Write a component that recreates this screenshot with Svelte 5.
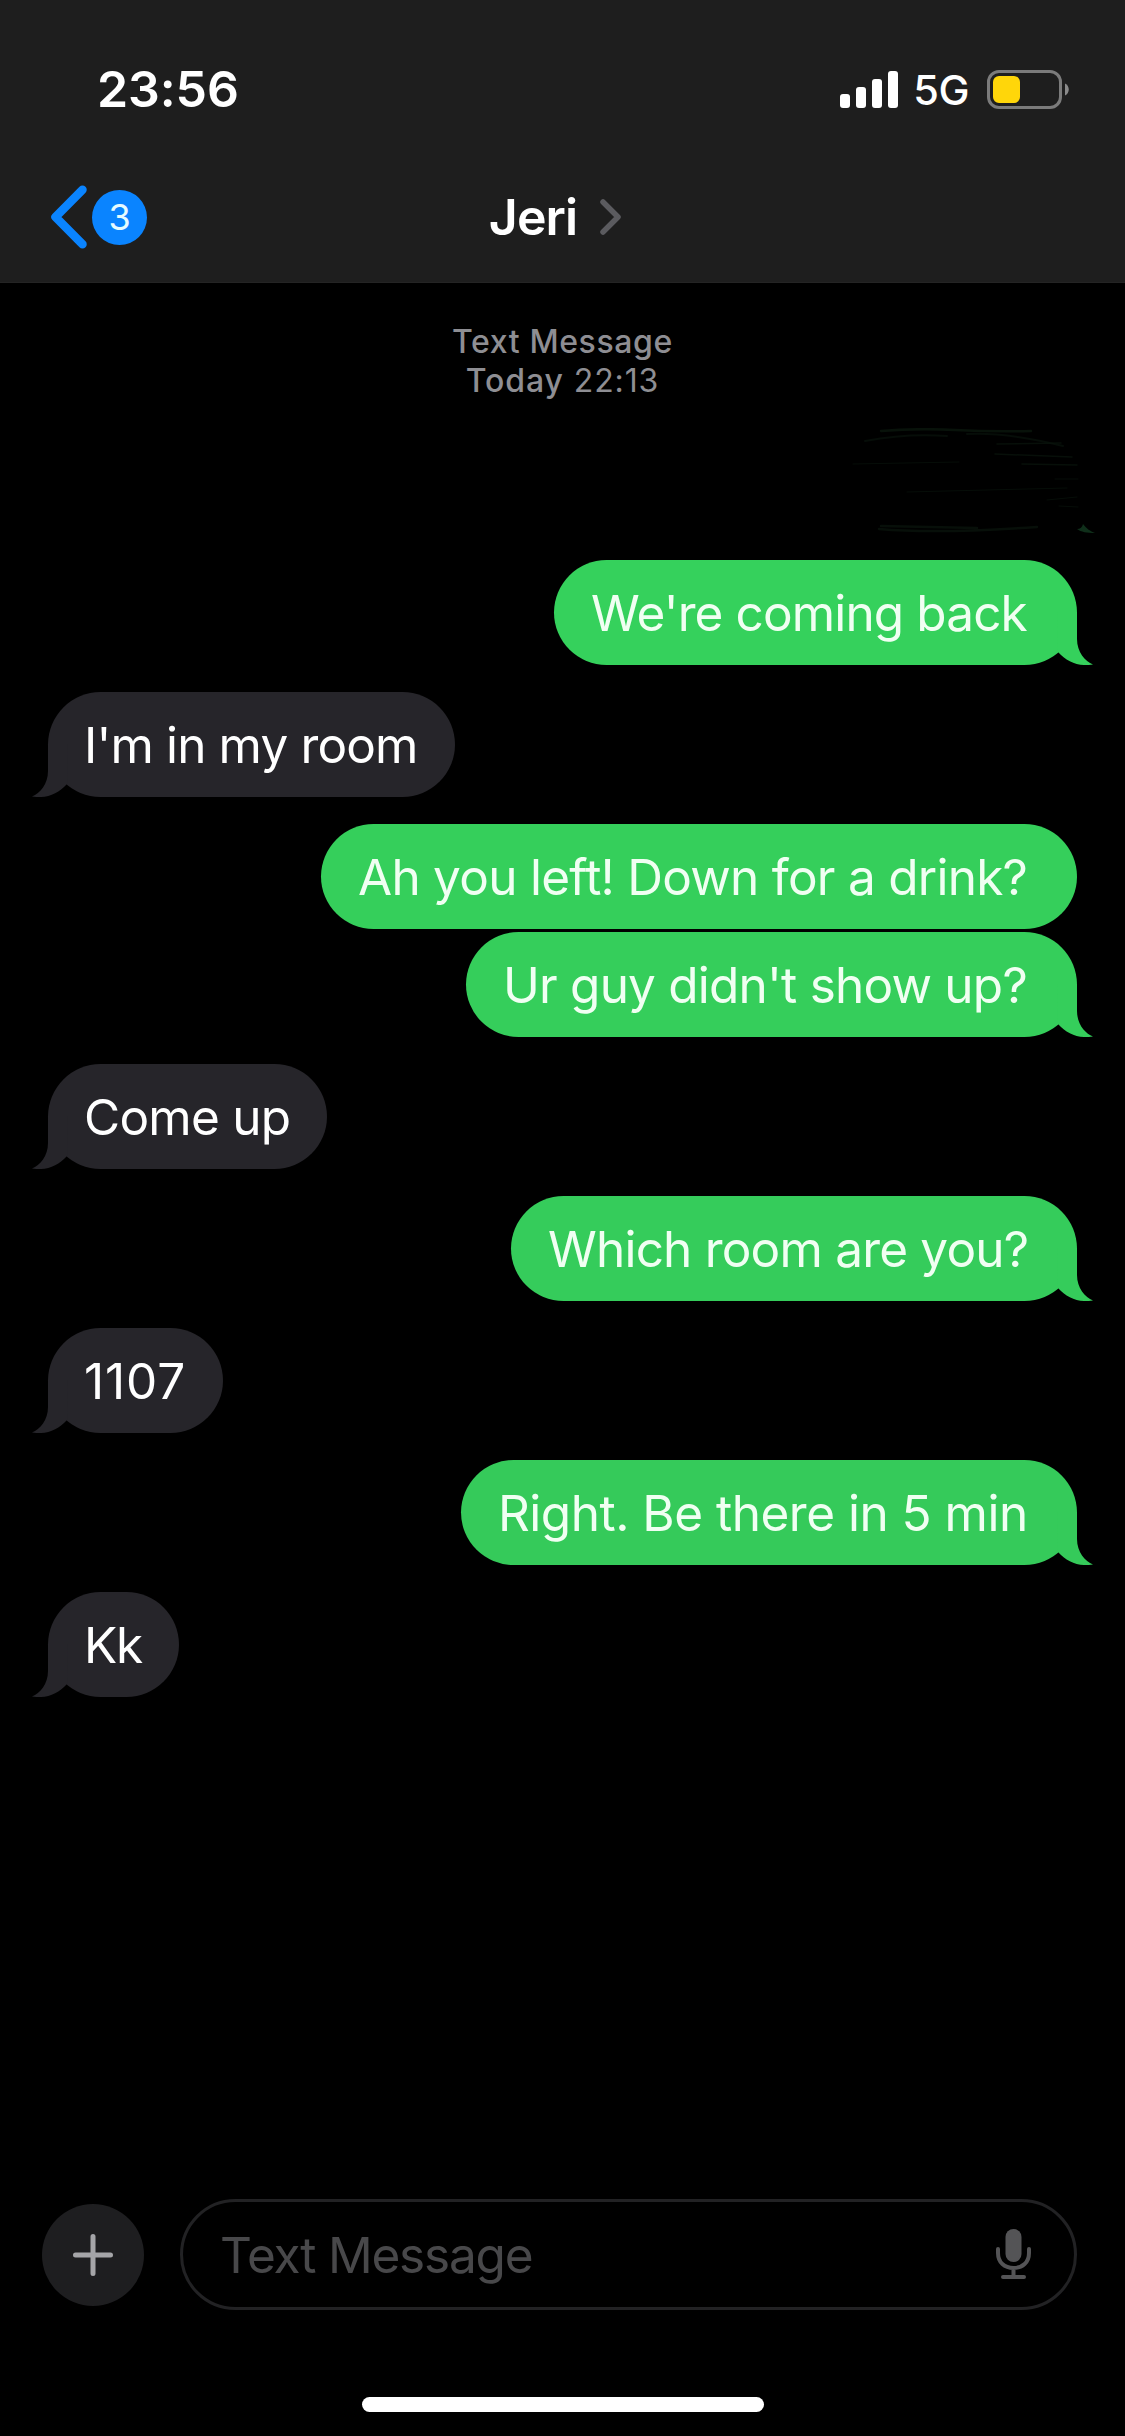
<script lang="ts">
	interface Message {
		text: string;
		from: 'me' | 'them';
		width: number;
		tracking: number;
		color: string;
		tail?: boolean;
		tight?: boolean;
	}

	const messages: Message[] = [
		{ text: "We're coming back", from: 'me', width: 523, tracking: -0.87, color: '#35d15c', tail: true },
		{ text: "I'm in my room", from: 'them', width: 407, tracking: -0.85, color: '#26252a', tail: true },
		{ text: 'Ah you left! Down for a drink?', from: 'me', width: 756, tracking: -0.74, color: '#35cf5b' },
		{ text: "Ur guy didn't show up?", from: 'me', width: 611, tracking: -0.78, color: '#35ce5b', tail: true, tight: true },
		{ text: 'Come up', from: 'them', width: 279, tracking: -0.75, color: '#26252a', tail: true },
		{ text: 'Which room are you?', from: 'me', width: 566, tracking: -0.8, color: '#35cc5b', tail: true },
		{ text: '1107', from: 'them', width: 175, tracking: 0.9, color: '#26252a', tail: true },
		{ text: 'Right. Be there in 5 min', from: 'me', width: 616, tracking: -0.5, color: '#35ca5a', tail: true },
		{ text: 'Kk', from: 'them', width: 131, tracking: -1.3, color: '#26252a', tail: true }
	];

	const contact = 'Jeri';
	const unread = 3;
	let draft = $state('');
</script>

<div class="phone">
	<header class="top">
		<div class="status">
			<span class="clock">23:56</span>
			<div class="indicators">
				<svg class="signal" viewBox="0 0 58 37">
					<rect x="0" y="23" width="10" height="14" rx="3" />
					<rect x="16" y="16" width="10" height="21" rx="3" />
					<rect x="32" y="8" width="10" height="29" rx="3" />
					<rect x="48" y="0" width="10" height="37" rx="3" />
				</svg>
				<span class="network">5G</span>
				<svg class="battery" viewBox="0 0 82 39">
					<rect x="1.5" y="1.5" width="72" height="36" rx="10.5" fill="none" stroke="#7b7b7b" stroke-width="3" />
					<rect x="6" y="6" width="27" height="27" rx="6" fill="#ffd60a" />
					<path d="M78 13.5C83 15.500 83 23.500 78 25.500Z" fill="#8a8a8a" />
				</svg>
			</div>
		</div>

		<nav class="nav">
			<button class="back" aria-label="Back">
				<svg viewBox="0 0 38 64">
					<path d="M32.500 4.700L5.500 32L32.500 59.300" fill="none" stroke="#0a84ff" stroke-width="8.500" stroke-linecap="round" stroke-linejoin="round" />
				</svg>
				<span class="badge">{unread}</span>
			</button>
			<div class="contact">
				<span>{contact}</span>
				<svg viewBox="0 0 22 36">
					<path d="M3 3L18 18L3 33" fill="none" stroke="#5b5b5f" stroke-width="5.500" stroke-linecap="round" stroke-linejoin="round" />
				</svg>
			</div>
		</nav>
	</header>

	<main class="thread">
		<div class="stamp">
			<div class="service">Text Message</div>
			<div class="day"><b>Today</b> 22:13</div>
		</div>

		<!-- Removed message, only a faint trace remains -->
		<svg class="ghost" viewBox="0 0 250 105">
			<g fill="none" stroke="#0a160d" stroke-linecap="round">
				<path d="M34 3Q70 0 108 2T184 3" stroke-width="2.500" opacity=".8" />
				<path d="M18 13Q60 5 100 8M120 6Q160 4 216 18" stroke-width="2" opacity=".6" />
				<path d="M150 16L214 15M148 26L225 29M175 36L230 37" stroke-width="1.500" opacity=".7" />
				<path d="M6 36L112 34M60 64L220 60M208 51L231 51M200 72L230 69M212 78L231 79" stroke-width="1" opacity=".6" />
				<path d="M32 101Q90 106 190 99M34 98L130 100" stroke-width="2.500" opacity=".7" />
			</g>
			<path d="M236 96C240 101 243 103 248 105C240 105 234 104 230 101Q235 101 236 96Z" fill="#0f2f1a" />
		</svg>

		{#each messages as m}
			<div class="row {m.from}" class:tight={m.tight}>
				<div class="bubble" style="width: {m.width}px; background: {m.color}; letter-spacing: {m.tracking}px">
					{m.text}
					{#if m.tail}
						<svg class="tail" viewBox="0 0 37 53" fill={m.color}>
							<path d="M0 0H20V27C20 40 28 49.500 36 52.500Q32 53 27 53C17 52.500 8 48 1 40Z" />
						</svg>
					{/if}
				</div>
			</div>
		{/each}
	</main>

	<footer class="composer">
		<button class="add" aria-label="Add">
			<svg viewBox="0 0 40 42">
				<path d="M20 2.500V39.500M2.500 21H37.500" stroke="#a5a5a8" stroke-width="5" stroke-linecap="round" />
			</svg>
		</button>
		<div class="field">
			<input type="text" placeholder="Text Message" bind:value={draft} />
			<svg class="mic" viewBox="0 0 35 51">
				<rect x="9.500" y="0" width="16" height="33" rx="8" fill="#545456" />
				<path d="M2 20V24C2 33.500 8.500 39 17.500 39S33 33.500 33 24V20M17.500 39V48M7 48H28" fill="none" stroke="#545456" stroke-width="4" stroke-linecap="round" />
			</svg>
		</div>
	</footer>

	<div class="home"></div>
</div>

<style>
	:global(body) {
		margin: 0;
		background: #000;
	}

	.phone {
		width: 1125px;
		height: 2436px;
		display: flex;
		flex-direction: column;
		background: #000;
		color: #fff;
		font-family: Inter, 'Liberation Sans', sans-serif;
		overflow: hidden;
	}

	button {
		border: none;
		padding: 0;
		background: none;
		font: inherit;
		color: inherit;
	}

	svg {
		display: block;
		flex: none;
	}

	/* Header */
	.top {
		height: 283px;
		box-sizing: border-box;
		background: #1e1e1e;
		border-bottom: 1px solid #242424;
		flex: none;
	}

	.status {
		display: flex;
		justify-content: space-between;
		align-items: center;
		height: 178px;
		padding: 0 56px 0 97px;
	}

	.clock {
		font-size: 50px;
		font-weight: 600;
		letter-spacing: -0.1px;
	}

	.indicators {
		display: flex;
		align-items: center;
	}

	.signal {
		width: 58px;
		height: 37px;
		fill: #fff;
	}

	.network {
		font-size: 41.5px;
		font-weight: 500;
		letter-spacing: -0.5px;
		margin: 1px 18px 0 15px;
	}

	.battery {
		width: 82px;
		height: 39px;
	}

	.nav {
		display: grid;
		grid-template-columns: 1fr auto 1fr;
		align-items: center;
		height: 78px;
		padding: 0 50px;
	}

	.back {
		display: flex;
		align-items: center;
		gap: 4px;
	}

	.back svg {
		width: 38px;
		height: 64px;
	}

	.badge {
		width: 55px;
		height: 55px;
		border-radius: 50%;
		background: #0a84ff;
		color: #e6fbff;
		font-size: 36px;
		line-height: 55px;
		text-align: center;
	}

	.contact {
		display: flex;
		align-items: center;
		gap: 23px;
		margin-right: 14px;
		font-size: 50px;
		font-weight: 600;
		letter-spacing: -0.9px;
	}

	.contact svg {
		width: 22px;
		height: 36px;
	}

	/* Thread */
	.thread {
		flex: 1;
		display: flex;
		flex-direction: column;
		padding: 39px 48px 0;
	}

	.stamp {
		text-align: center;
		color: #8e8e93;
		font-size: 32px;
		line-height: 39px;
		letter-spacing: 0.6px;
	}

	.day {
		letter-spacing: 0.9px;
	}

	.service,
	.stamp b {
		font-weight: 500;
	}

	.ghost {
		width: 250px;
		height: 105px;
		margin: 28px -20px 0 0;
		align-self: flex-end;
	}

	.row {
		display: flex;
		margin-top: 27px;
	}

	.row.tight {
		margin-top: 3px;
	}

	.row.me {
		justify-content: flex-end;
	}

	.bubble {
		position: relative;
		box-sizing: border-box;
		height: 105px;
		padding-left: 37px;
		border-radius: 52.5px;
		font-size: 49.5px;
		line-height: 106px;
		white-space: nowrap;
	}

	.me .bubble {
		color: #f0fff2;
	}

	.them .bubble {
		padding-left: 36px;
	}

	.tail {
		position: absolute;
		bottom: 0;
		width: 37px;
		height: 53px;
	}

	.me .tail {
		right: -17px;
	}

	.them .tail {
		left: -17px;
		transform: scaleX(-1);
	}

	/* Composer */
	.composer {
		display: flex;
		align-items: center;
		gap: 36px;
		padding: 0 48px 0 42px;
		height: 111px;
		flex: none;
	}

	.add {
		width: 102px;
		height: 102px;
		border-radius: 50%;
		background: #1e1e20;
		display: flex;
		align-items: center;
		justify-content: center;
		flex: none;
	}

	.add svg {
		width: 40px;
		height: 42px;
		margin-right: 1px;
	}

	.field {
		flex: 1;
		height: 111px;
		box-sizing: border-box;
		border: 3px solid #222224;
		border-radius: 56px;
		display: flex;
		align-items: center;
		padding: 0 43px 0 37px;
	}

	.field input {
		flex: 1;
		min-width: 0;
		border: none;
		outline: none;
		padding: 0;
		background: none;
		color: #fff;
		font: inherit;
		font-size: 49.5px;
		letter-spacing: -1.2px;
	}

	.field input::placeholder {
		color: #48484a;
		opacity: 1;
	}

	.mic {
		width: 35px;
		height: 51px;
	}

	.home {
		width: 402px;
		height: 15px;
		border-radius: 8px;
		background: #fff;
		margin: 87px auto 24px;
		flex: none;
	}
</style>
